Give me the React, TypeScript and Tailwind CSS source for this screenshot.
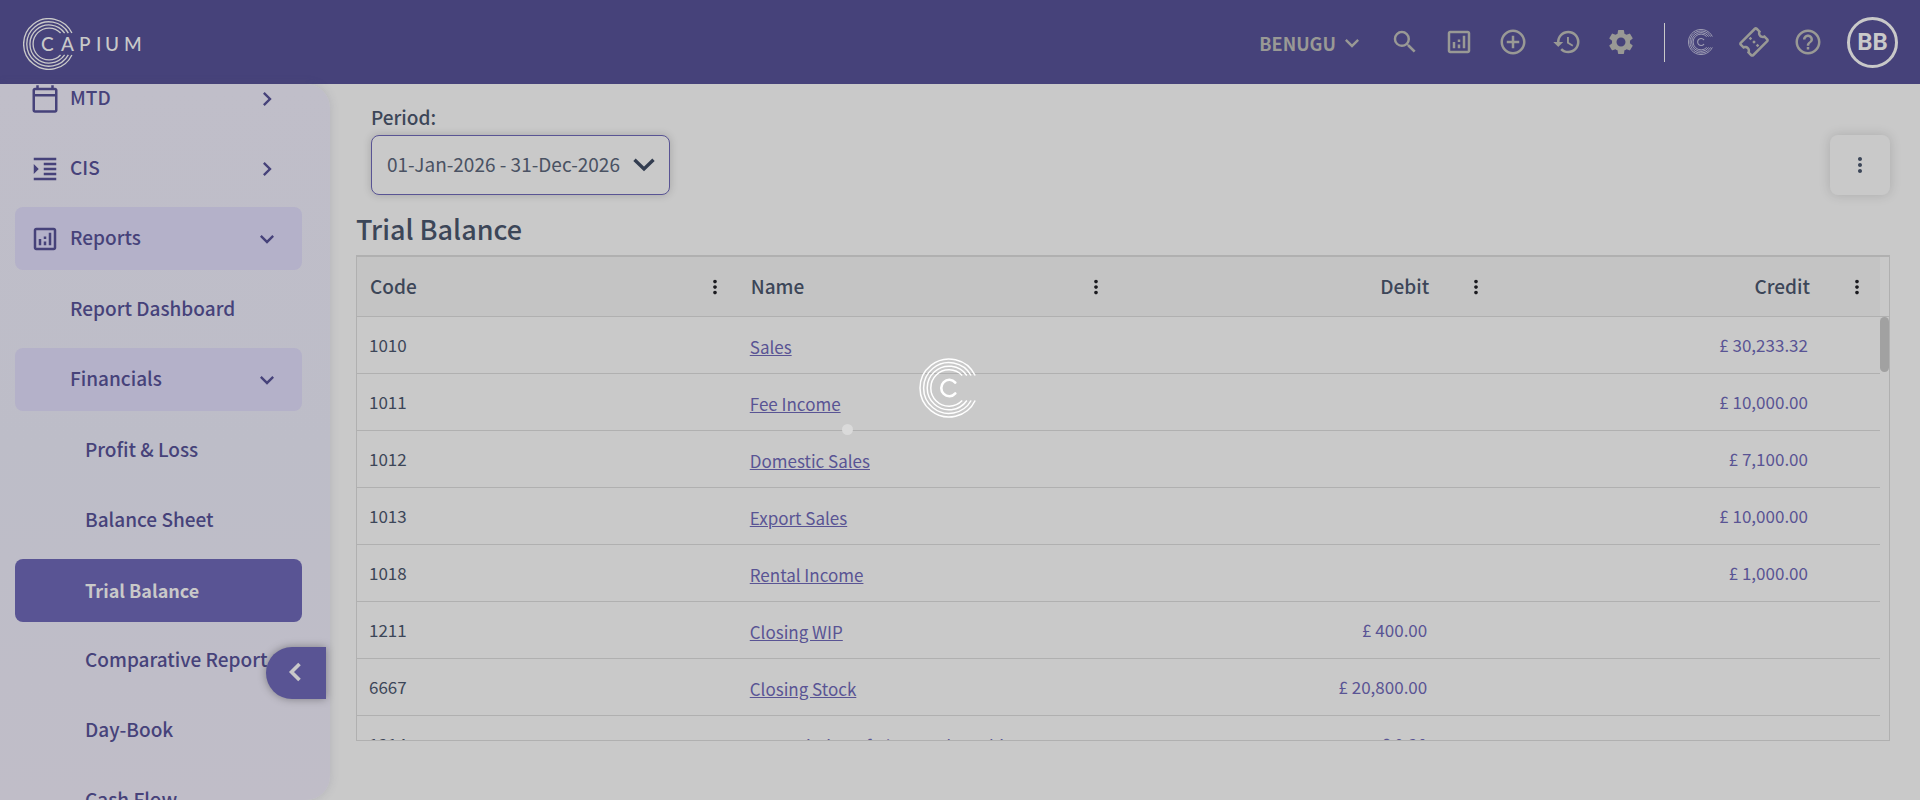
import type { ReactNode } from "react";
import {
  MdAddCircleOutline,
  MdChevronRight,
  MdExpandMore,
  MdFormatIndentIncrease,
  MdHelpOutline,
  MdHistory,
  MdMoreVert,
  MdOutlineAnalytics,
  MdOutlineCalendarToday,
  MdOutlineConfirmationNumber,
  MdSearch,
  MdSettings,
} from "react-icons/md";

const RING_RADII = [29, 25.4, 21.8, 18.2];

// Concentric rings, open on the right between y = -12.5 and y = 12.5.
function Rings({ width }: { width: number }) {
  return (
    <g fill="none" stroke="currentColor" strokeWidth={width}>
      {RING_RADII.map((r) => {
        const x = Math.sqrt(r * r - 12.5 * 12.5);
        return <path key={r} d={`M${x} -12.5A${r} ${r} 0 1 0 ${x} 12.5`} />;
      })}
    </g>
  );
}

function RingMark({ className, ringWidth }: { className: string; ringWidth: number }) {
  return (
    <svg viewBox="-30 -30 60 60" className={className} aria-hidden="true">
      <Rings width={ringWidth} />
      <path
        d="M6.3 -5.4A8 8.2 0 1 0 6.3 5.4"
        fill="none"
        stroke="currentColor"
        strokeWidth="2.6"
        strokeLinecap="round"
      />
    </svg>
  );
}

function Logo() {
  return (
    <svg viewBox="0 0 130 52" className="h-[52px] w-[130px] text-[#c9c9c9]" role="img" aria-label="Capium">
      <g transform="translate(26 26) scale(0.875)">
        <Rings width={1.5} />
      </g>
      <text
        x="18 38 56 73 82 101"
        y="33"
        fontSize="19"
        fill="currentColor"
        className="font-['Lato',sans-serif] font-medium"
      >
        CAPIUM
      </text>
    </svg>
  );
}

type Tone = "plain" | "open" | "active";

const TONES: Record<Tone, string> = {
  plain: "text-[19px] font-medium text-[#46427a]",
  open: "bg-[#b4b1c9] text-[19px] font-medium text-[#46427a]",
  active: "bg-[#595494] text-lg font-bold text-[#c9c9c9]",
};

function NavItem({
  label,
  icon,
  indent = "pl-[70px]",
  tone = "plain",
  chevron,
}: {
  label: string;
  icon?: ReactNode;
  indent?: string;
  tone?: Tone;
  chevron?: ReactNode;
}) {
  return (
    <a
      href="#"
      className={`flex h-[63px] shrink-0 items-center rounded-lg pr-[21px] whitespace-nowrap ${TONES[tone]} ${icon ? "gap-2.5 pl-[15px]" : indent}`}
    >
      {icon}
      <span className="flex-1 pb-0.5">{label}</span>
      {chevron}
    </a>
  );
}

const right = <MdChevronRight className="size-7" />;
const down = <MdExpandMore className="size-7" />;

function Sidebar() {
  return (
    <aside className="relative w-[330px] shrink-0">
      <div className="h-full overflow-hidden rounded-r-3xl bg-linear-to-b from-[#c0bec9] via-[#bdbdc8] to-[#c0bdc8] pr-7 pl-[15px] shadow-[0_0_10px_rgba(80,80,110,0.18)]">
        <nav className="-mt-[17px] flex flex-col gap-[7px]">
          <NavItem label="MTD" icon={<MdOutlineCalendarToday className="size-[30px]" />} chevron={right} />
          <NavItem label="CIS" icon={<MdFormatIndentIncrease className="size-[30px]" />} chevron={right} />
          <div className="flex flex-col gap-2">
            <NavItem label="Reports" icon={<MdOutlineAnalytics className="size-[30px]" />} chevron={down} tone="open" />
            <div className="flex flex-col gap-[7px]">
              <NavItem label="Report Dashboard" indent="pl-[55px]" />
              <NavItem label="Financials" indent="pl-[55px]" chevron={down} tone="open" />
            </div>
            <div className="flex flex-col gap-[7px]">
              <NavItem label="Profit & Loss" />
              <NavItem label="Balance Sheet" />
              <NavItem label="Trial Balance" tone="active" />
              <NavItem label="Comparative Report" />
              <NavItem label="Day-Book" />
              <NavItem label="Cash Flow" />
            </div>
          </div>
        </nav>
      </div>
      <button
        type="button"
        aria-label="Collapse menu"
        className="absolute right-1 bottom-[101px] flex h-[52px] w-[60px] items-center justify-center rounded-l-full bg-[#595494] pr-0.5 pb-0.5 text-[#c9c9c9] shadow-[0_0_8px_rgba(0,0,0,0.35)]"
      >
        <svg viewBox="0 0 14 20" className="h-5 w-3.5" aria-hidden="true">
          <path d="M11.5 2L3.5 10L11.5 18" fill="none" stroke="currentColor" strokeWidth="3.6" />
        </svg>
      </button>
    </aside>
  );
}

function IconButton({ label, children }: { label: string; children: ReactNode }) {
  return (
    <button type="button" aria-label={label} className="flex size-[30px] items-center justify-center">
      {children}
    </button>
  );
}

function Header() {
  return (
    <header className="flex h-[84px] shrink-0 items-center justify-between bg-[#46427a] pr-[22px] pl-[23px] text-[#999995]">
      <a href="#" className="pt-1">
        <Logo />
      </a>
      <div className="flex items-center">
        <button type="button" className="mr-6 flex items-center gap-0.5 pt-0.5 text-lg font-bold">
          BENUGU
          <MdExpandMore className="size-7" />
        </button>
        <div className="flex items-center gap-6">
          <IconButton label="Search"><MdSearch className="size-[30px]" /></IconButton>
          <IconButton label="Analytics"><MdOutlineAnalytics className="size-[30px]" /></IconButton>
          <IconButton label="Add"><MdAddCircleOutline className="size-[30px]" /></IconButton>
          <IconButton label="History"><MdHistory className="size-[30px]" /></IconButton>
          <IconButton label="Settings"><MdSettings className="size-[30px]" /></IconButton>
        </div>
        <div className="mr-[21px] ml-7 h-[39px] w-px bg-[#c9c9c9]" />
        <div className="flex items-center gap-[23px]">
          <IconButton label="Capium apps">
            <RingMark className="size-[26px] text-[#a09eb4]" ringWidth={2.2} />
          </IconButton>
          <div className="flex items-center gap-6">
            <IconButton label="Tickets"><MdOutlineConfirmationNumber className="size-[30px] -rotate-45" /></IconButton>
            <IconButton label="Help"><MdHelpOutline className="size-[30px]" /></IconButton>
            <button
              type="button"
              className="flex size-[51px] items-center justify-center rounded-full border-3 border-[#c9c9c9] text-2xl font-bold text-[#c9c9c9] font-['Roboto',sans-serif]"
            >
              BB
            </button>
          </div>
        </div>
      </div>
    </header>
  );
}

type Row = { code: string; name: string; debit?: string; credit?: string };

const ROWS: Row[] = [
  { code: "1010", name: "Sales", credit: "£ 30,233.32" },
  { code: "1011", name: "Fee Income", credit: "£ 10,000.00" },
  { code: "1012", name: "Domestic Sales", credit: "£ 7,100.00" },
  { code: "1013", name: "Export Sales", credit: "£ 10,000.00" },
  { code: "1018", name: "Rental Income", credit: "£ 1,000.00" },
  { code: "1211", name: "Closing WIP", debit: "£ 400.00" },
  { code: "6667", name: "Closing Stock", debit: "£ 20,800.00" },
  { code: "1214", name: "Depreciation of plant and machinery", debit: "£ 0.20" },
];

const COLUMNS = [
  { title: "Code", numeric: false },
  { title: "Name", numeric: false },
  { title: "Debit", numeric: true },
  { title: "Credit", numeric: true },
];

function TrialBalanceTable() {
  return (
    <div className="flex min-h-0 flex-1 overflow-hidden border border-t-2 border-[#b0b0b0]">
      <div className="min-w-0 flex-1">
        <table className="w-full table-fixed border-separate border-spacing-0">
          <thead>
            <tr className="h-[60px] bg-[#c4c4c4]">
              {COLUMNS.map((c) => (
                <th key={c.title} className="border-b border-[#b0b0b0] p-0 text-[19px] font-medium">
                  <div className="flex items-center justify-between pr-3 pl-[13px]">
                    <span className={c.numeric ? "flex-1 pr-9 text-right" : ""}>{c.title}</span>
                    <button type="button" aria-label={`${c.title} column menu`} className="text-[#1b1b1f]">
                      <MdMoreVert className="size-[22px]" />
                    </button>
                  </div>
                </th>
              ))}
            </tr>
          </thead>
          <tbody>
            {ROWS.map((r) => (
              <tr key={r.code} className="h-[57px] text-[17px]">
                <td className="border-b border-[#b0b0b0] p-0 pl-3">{r.code}</td>
                <td className="border-b border-[#b0b0b0] p-0 pt-1 pl-3 whitespace-nowrap">
                  <a href="#" className="text-[#595494] underline">{r.name}</a>
                </td>
                <td className="border-b border-[#b0b0b0] p-0 pr-[72px] text-right text-[#595494]">{r.debit}</td>
                <td className="border-b border-[#b0b0b0] p-0 pr-[72px] text-right text-[#595494]">{r.credit}</td>
              </tr>
            ))}
          </tbody>
        </table>
      </div>
      <div className="w-[9px] shrink-0">
        <div className="h-[60px] border-b border-[#b0b0b0]" />
        <div className="h-[55px] rounded-full bg-[#a1a1a1]" />
      </div>
    </div>
  );
}

function Loader() {
  return (
    <div className="pointer-events-none absolute inset-0 flex items-center justify-center pr-[22px] pb-6">
      <div className="relative text-white">
        <RingMark className="size-[60px]" ringWidth={1.5} />
        <span className="absolute top-9 right-full mt-[30px] mr-[66px] size-[11px] rounded-full bg-[#dadada]" />
      </div>
    </div>
  );
}

export default function App() {
  return (
    <div className="relative flex h-screen flex-col overflow-hidden bg-[#c9c9c9] font-['Noto_Sans_CJK_SC',sans-serif] text-[#3c4658]">
      <Header />
      <div className="flex min-h-0 flex-1">
        <Sidebar />
        <main className="flex min-w-0 flex-1 flex-col pt-[19px] pr-[30px] pb-[59px] pl-[26px]">
          <div className="flex items-end justify-between pl-[15px]">
            <div>
              <label htmlFor="period" className="block h-8 text-[19px] leading-7 font-medium">
                Period:
              </label>
              <div className="relative">
                <select
                  id="period"
                  className="h-[60px] w-[299px] appearance-none rounded-lg border border-[#595494] bg-[#c9c9c9] pb-0.5 pl-[15px] text-[19px] text-[#4a5263] shadow-[0_0_8px_rgba(0,0,0,0.18)]"
                >
                  <option>01-Jan-2026 - 31-Dec-2026</option>
                </select>
                <svg
                  viewBox="0 0 22 14"
                  className="pointer-events-none absolute top-[23px] right-[15px] h-3.5 w-[22px]"
                  aria-hidden="true"
                >
                  <path d="M1.5 1.8L11 11L20.5 1.8" fill="none" stroke="#333d50" strokeWidth="3.4" />
                </svg>
              </div>
            </div>
            <button
              type="button"
              aria-label="More options"
              className="flex size-[60px] items-center justify-center rounded-lg bg-[#c9c9c9] shadow-[0_0_12px_rgba(0,0,0,0.15)]"
            >
              <MdMoreVert className="size-6" />
            </button>
          </div>
          <h1 className="mt-3.5 mb-[7px] text-[27px] leading-[39px] font-medium">Trial Balance</h1>
          <TrialBalanceTable />
        </main>
      </div>
      <Loader />
    </div>
  );
}
